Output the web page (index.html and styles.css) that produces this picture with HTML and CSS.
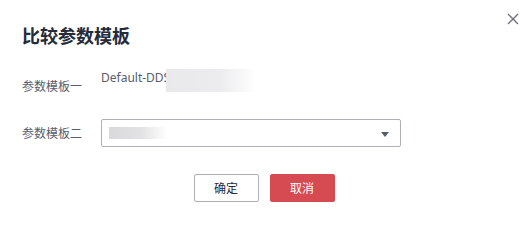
FILE: index.html
```html
<!DOCTYPE html>
<html lang="zh-CN">

<head>
    <meta charset="UTF-8">
    <meta name="viewport" content="width=device-width, initial-scale=1.0">
    <title>比较参数模板</title>
    <link rel="stylesheet" href="styles.css">
</head>

<body>
    <div class="dialog">
        <button class="close" aria-label="关闭">
            <svg width="12" height="12" viewBox="0 0 12 12">
                <path d="M1 1 L11 11 M11 1 L1 11" stroke="#6c7080" stroke-width="1.3" fill="none" />
            </svg>
        </button>

        <h1 class="title">比较参数模板</h1>

        <div class="form">
            <div class="row">
                <span class="label label-low">参数模板一</span>
                <div class="value">
                    <span>Default-DDS</span>
                    <span class="mask mask-wide"></span>
                </div>
            </div>

            <div class="row">
                <span class="label">参数模板二</span>
                <div class="select">
                    <span class="mask mask-small"></span>
                    <span class="caret"></span>
                </div>
            </div>
        </div>

        <div class="actions">
            <button class="btn">确定</button>
            <button class="btn btn-danger">取消</button>
        </div>
    </div>
</body>

</html>
```

FILE: styles.css
```css
body {
    margin: 0;
    font-family: "Noto Sans", "Noto Sans CJK SC", sans-serif;
    background: #fff;
    color: #252b3a;
}

.dialog {
    position: relative;
    width: 532px;
    height: 226px;
    padding: 20px 22px 0;
    box-sizing: border-box;
}

.close {
    position: absolute;
    top: 13px;
    right: 13px;
    padding: 0;
    border: none;
    background: none;
    width: 12px;
    height: 12px;
    display: flex;
}

.title {
    margin: 0;
    font-size: 18px;
    font-weight: bold;
    line-height: 32px;
    color: #252b3a;
}

.form {
    display: flex;
    flex-direction: column;
    gap: 27px;
    margin-top: 17px;
}

.row {
    display: flex;
    align-items: center;
    height: 23px;
}

.row:last-child {
    height: 28px;
}

.label {
    width: 79px;
    font-size: 12px;
    color: #575d6c;
}

.label-low {
    padding-top: 10px;
}

.value {
    display: flex;
    align-items: center;
    font-size: 12px;
    color: #575d6c;
    height: 23px;
}

.value span:first-child {
    margin-top: -7px;
}

.mask {
    display: block;
}

.mask-wide {
    width: 90px;
    height: 23px;
    margin-left: -4px;
    background: linear-gradient(to right, #e9e9eb 0%, #ececee 60%, #ffffff 100%);
}

.select {
    position: relative;
    width: 300px;
    height: 28px;
    box-sizing: border-box;
    border: 1px solid #adb0b8;
    border-radius: 2px;
    display: flex;
    align-items: center;
    padding-left: 7px;
}

.mask-small {
    width: 58px;
    height: 12px;
    background: linear-gradient(to right, #d9d9db 0%, #e2e2e4 55%, #ffffff 100%);
}

.caret {
    position: absolute;
    right: 11px;
    top: 12px;
    width: 0;
    height: 0;
    border-left: 4px solid transparent;
    border-right: 4px solid transparent;
    border-top: 5px solid #575d6c;
}

.actions {
    display: flex;
    justify-content: center;
    gap: 11px;
    margin-top: 27px;
    padding-right: 4px;
}

.btn {
    width: 65px;
    height: 28px;
    font-family: "Noto Sans", "Noto Sans CJK SC", sans-serif;
    font-size: 12px;
    color: #252b3a;
    background: #fff;
    border: 1px solid #adb0b8;
    border-radius: 2px;
    padding: 0;
}

.btn-danger {
    background: #d64a52;
    border-color: #d64a52;
    color: #fff;
}
```
